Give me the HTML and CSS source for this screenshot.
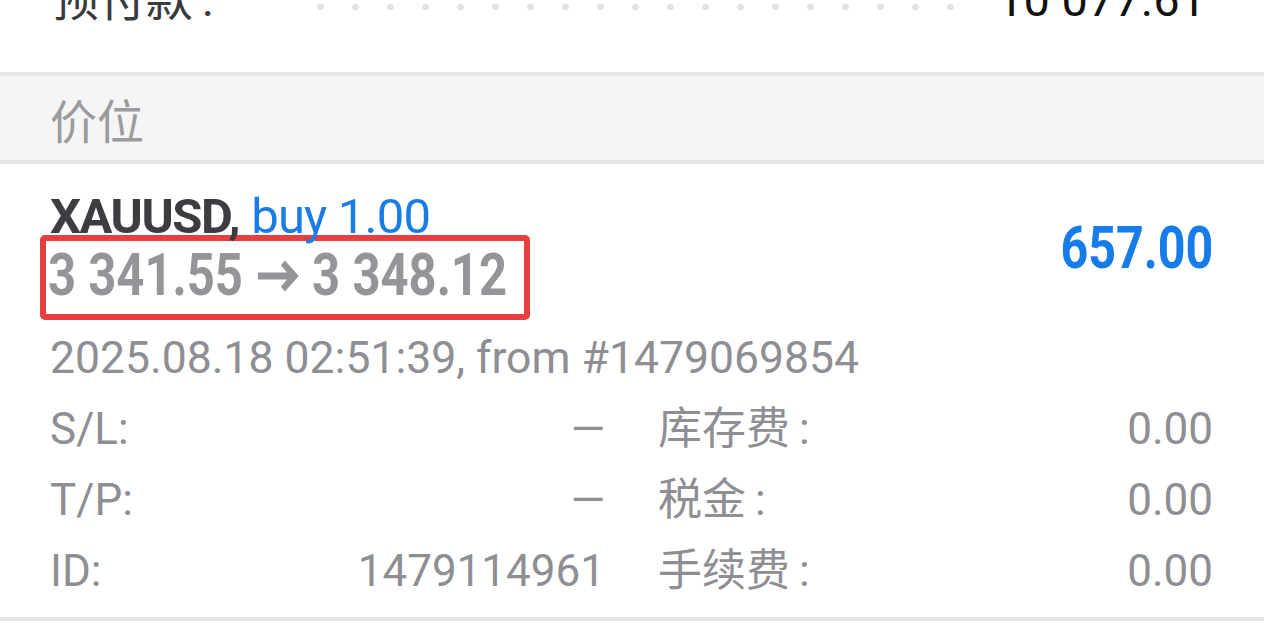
FILE: index.html
```html
<!DOCTYPE html>
<html lang="zh">
<head>
<meta charset="utf-8">
<title>价位</title>
<link rel="stylesheet" href="styles.css">
</head>
<body>
<div class="summary">
  <div class="summary-row">
    <span class="summary-label">预付款<span class="colon">:</span></span>
    <span class="leader"></span>
    <span class="summary-value">10 077.61</span>
  </div>
</div>
<div class="divider"></div>
<div class="section-header">价位</div>
<div class="divider"></div>
<div class="card">
  <div class="card-top">
    <div class="card-main">
      <div class="title"><span class="symbol">XAUUSD,</span> <span class="side">buy 1.00</span></div>
      <div class="price-box"><span class="prices">3 341.55 <svg class="arrow" width="54" height="34" viewBox="0 0 54 34" aria-hidden="true"><path d="M3 17 H47 M33 4 L47 17 L33 30" fill="none" stroke="currentColor" stroke-width="7"/></svg> 3 348.12</span></div>
    </div>
    <div class="profit"><span class="profit-num">657.00</span></div>
  </div>
  <div class="meta">2025.08.18 02:51:39, from #1479069854</div>
  <div class="details">
    <div class="cell"><span>S/L:</span><span>—</span></div>
    <div class="cell"><span>库存费<span class="colon">:</span></span><span>0.00</span></div>
    <div class="cell"><span>T/P:</span><span>—</span></div>
    <div class="cell"><span>税金<span class="colon">:</span></span><span>0.00</span></div>
    <div class="cell"><span>ID:</span><span>1479114961</span></div>
    <div class="cell"><span>手续费<span class="colon">:</span></span><span>0.00</span></div>
  </div>
</div>
<div class="divider"></div>
</body>
</html>
```

FILE: styles.css
```css
html, body {
  margin: 0;
  padding: 0;
  background: #ffffff;
}
body {
  font-family: Roboto, "Noto Sans CJK SC", sans-serif;
  color: #8e8e93;
  overflow: hidden;
}
.summary {
  display: flow-root;
  height: 72px;
}
.summary-row {
  display: flex;
  align-items: flex-start;
  margin-top: -23px;
  padding: 0 58px 0 52px;
  font-size: 47px;
  line-height: 46px;
}
.summary-label {
  color: #3a3a3e;
}
.colon {
  margin-left: 9px;
}
.leader {
  flex: 1;
  height: 46px;
  margin: 0 30px 0 90px;
  background: radial-gradient(circle, #e2e2e2 3px, rgba(255,255,255,0) 3.6px) 0 26px / 35px 8px repeat-x;
}
.summary-value {
  color: #111111;
}
.divider {
  height: 4px;
  background: #e6e6e6;
}
.section-header {
  height: 84px;
  background: #f5f5f5;
  display: flex;
  align-items: center;
  padding-left: 50px;
  font-size: 47px;
  color: #9b9b9e;
}
.card {
  padding: 28px 51px 10px 50px;
}
.card-top {
  display: flex;
  justify-content: space-between;
  align-items: flex-start;
}
.title {
  font-size: 49px;
  line-height: 50px;
  white-space: nowrap;
}
.symbol {
  font-weight: 700;
  color: #3c3c41;
  letter-spacing: -1.5px;
}
.side {
  color: #1a7de6;
  letter-spacing: -0.8px;
}
.price-box {
  margin: -7px 0 0 -10px;
  width: 476px;
  padding: 0 0 5px 2px;
  border: 6px solid #e5403f;
  border-radius: 5px;
  font-size: 59px;
  line-height: 68px;
  font-weight: 700;
  color: #959599;
  white-space: nowrap;
}
.prices {
  display: inline-block;
  transform: scaleX(0.83);
  transform-origin: left center;
}
.arrow {
  vertical-align: 2px;
}
.profit {
  margin-top: 26px;
  font-size: 59px;
  line-height: 59px;
  font-weight: 700;
  color: #157ce9;
}
.profit-num {
  display: inline-block;
  transform: scaleX(0.82);
  transform-origin: right center;
}
.meta {
  margin-top: 8px;
  font-size: 44.5px;
  line-height: 60px;
  white-space: nowrap;
}
.details {
  margin-top: 6px;
  display: grid;
  grid-template-columns: 1fr 1fr;
  column-gap: 53px;
  font-size: 44px;
  line-height: 71px;
}
.cell {
  display: flex;
  justify-content: space-between;
}
```
